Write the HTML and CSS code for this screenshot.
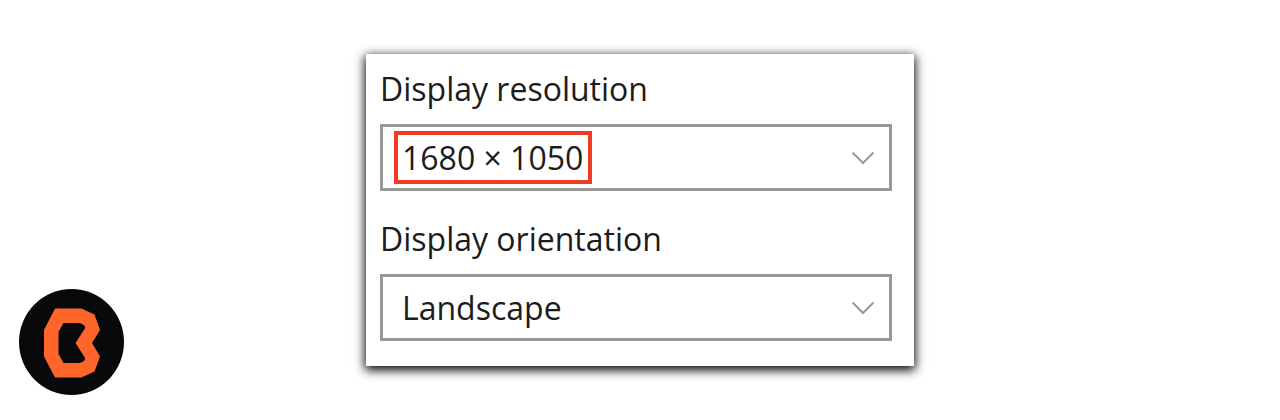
FILE: index.html
```html
<!DOCTYPE html>
<html lang="en">
<head>
<meta charset="utf-8">
<title>Display settings</title>
<meta name="viewport" content="width=device-width, initial-scale=1">
<link rel="stylesheet" href="styles.css">
</head>
<body>
<main class="page">
  <svg class="logo" viewBox="0 0 105 106" role="img" aria-label="Logo">
    <ellipse cx="52.5" cy="53" rx="52.5" ry="53" fill="#07090a"/>
    <path fill="#ff652b" fill-rule="evenodd" d="M36 19.500H62.500L75.500 25.500L81 41L73 54L81 67.500L75.500 82.500L62.500 88.500H36L25 67.500V41ZM44.500 34L39.500 43V65L44.500 74H60Q64.500 73 66 70.500Q66.500 69.500 65.500 68L56.500 54L65.500 40Q66.500 38.500 66 37.500Q64.500 35 60 34Z"/>
  </svg>
  <form class="card">
    <div class="field">
      <label class="label" for="resolution">Display resolution</label>
      <div class="control">
        <select class="select" id="resolution"><option>1680 × 1050</option></select>
        <svg class="chevron" viewBox="0 0 24 14" aria-hidden="true"><path d="M1.500 1.500L12 12L22.500 1.500"/></svg>
        <span class="highlight"></span>
      </div>
    </div>
    <div class="field">
      <label class="label" for="orientation">Display orientation</label>
      <div class="control">
        <select class="select" id="orientation"><option>Landscape</option></select>
        <svg class="chevron" viewBox="0 0 24 14" aria-hidden="true"><path d="M1.500 1.500L12 12L22.500 1.500"/></svg>
      </div>
    </div>
  </form>
</main>
</body>
</html>
```
FILE: styles.css
```css
* {
  box-sizing: border-box;
}

body {
  margin: 0;
  background: #fff;
  color: #1c1c1c;
  font-family: "Open Sans", "Noto Sans", sans-serif;
  font-size: 32px;
  line-height: 44px;
}

.page {
  display: grid;
  grid-template-columns: 1fr minmax(0, 548px) 1fr;
  align-items: center;
  min-height: 100vh;
}

.logo {
  width: 105px;
  height: 106px;
  margin: 0 0 25px 19px;
  align-self: end;
}

.card {
  display: flex;
  flex-direction: column;
  gap: 26px;
  padding: 13px 22px 25px 14px;
  background: #fff;
  box-shadow: 0 3px 10px 1px #000;
}

.field {
  display: flex;
  flex-direction: column;
  gap: 13px;
}

.label {
  height: 44px;
}

.control {
  display: grid;
  position: relative;
  align-items: center;
}

.select {
  appearance: none;
  width: 100%;
  height: 67px;
  padding: 0 64px 0 19px;
  border: 3px solid #999;
  border-radius: 0;
  background: #fff;
  color: inherit;
  font: inherit;
}

.chevron {
  position: absolute;
  right: 17px;
  width: 24px;
  height: 14px;
  fill: none;
  stroke: #999;
  stroke-width: 2;
  pointer-events: none;
}

.highlight {
  position: absolute;
  left: 14px;
  width: 198px;
  height: 53px;
  border: 4px solid #ee3d23;
  pointer-events: none;
}
```
